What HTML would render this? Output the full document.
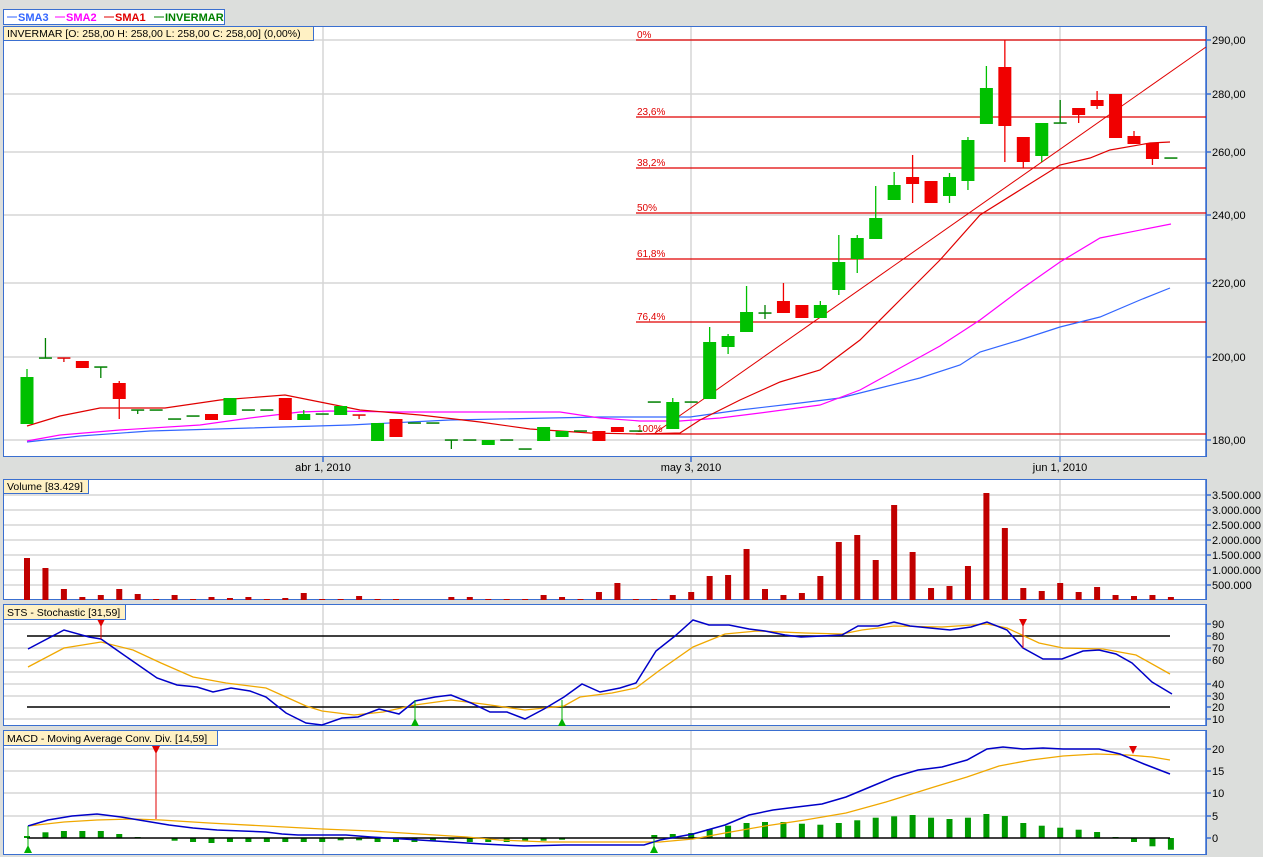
<!DOCTYPE html>
<html><head><meta charset="utf-8">
<style>
html,body{margin:0;padding:0;background:#dcdedc;width:1263px;height:857px;overflow:hidden;font-family:"Liberation Sans",sans-serif}
svg{position:absolute;left:0;top:0}
.ax{font-size:11px;fill:#000}
.fib{font-size:10px;fill:#e00000}
.lab{font-size:10.5px;fill:#000}
</style></head><body>
<svg id="s" width="1263" height="857" xmlns="http://www.w3.org/2000/svg">
<rect x="3.5" y="26.5" width="1203" height="430" fill="#fff" stroke="#3a6fd0"/>
<rect x="3.5" y="479.5" width="1203" height="120" fill="#fff" stroke="#3a6fd0"/>
<rect x="3.5" y="604.5" width="1203" height="121" fill="#fff" stroke="#3a6fd0"/>
<rect x="3.5" y="730.5" width="1203" height="124" fill="#fff" stroke="#3a6fd0"/>
<g stroke="#d6d6d6" stroke-width="1.5">
<line x1="4" y1="40" x2="1206" y2="40"/><line x1="4" y1="94" x2="1206" y2="94"/><line x1="4" y1="152" x2="1206" y2="152"/><line x1="4" y1="215" x2="1206" y2="215"/><line x1="4" y1="283" x2="1206" y2="283"/><line x1="4" y1="357" x2="1206" y2="357"/><line x1="4" y1="440" x2="1206" y2="440"/>
<line x1="323" y1="27" x2="323" y2="456"/><line x1="691" y1="27" x2="691" y2="456"/><line x1="1060" y1="27" x2="1060" y2="456"/>
<line x1="4" y1="495" x2="1206" y2="495"/><line x1="4" y1="510" x2="1206" y2="510"/><line x1="4" y1="525" x2="1206" y2="525"/><line x1="4" y1="540" x2="1206" y2="540"/><line x1="4" y1="555" x2="1206" y2="555"/><line x1="4" y1="570" x2="1206" y2="570"/><line x1="4" y1="585" x2="1206" y2="585"/>
<line x1="323" y1="480" x2="323" y2="599"/><line x1="691" y1="480" x2="691" y2="599"/><line x1="1060" y1="480" x2="1060" y2="599"/>
<line x1="4" y1="624" x2="1206" y2="624"/><line x1="4" y1="648" x2="1206" y2="648"/><line x1="4" y1="660" x2="1206" y2="660"/><line x1="4" y1="672" x2="1206" y2="672"/><line x1="4" y1="684" x2="1206" y2="684"/><line x1="4" y1="696" x2="1206" y2="696"/><line x1="4" y1="719" x2="1206" y2="719"/>
<line x1="323" y1="605" x2="323" y2="725"/><line x1="691" y1="605" x2="691" y2="725"/><line x1="1060" y1="605" x2="1060" y2="725"/>
<line x1="4" y1="749" x2="1206" y2="749"/><line x1="4" y1="771" x2="1206" y2="771"/><line x1="4" y1="793" x2="1206" y2="793"/><line x1="4" y1="816" x2="1206" y2="816"/>
<line x1="323" y1="731" x2="323" y2="854"/><line x1="691" y1="731" x2="691" y2="854"/><line x1="1060" y1="731" x2="1060" y2="854"/>
</g>
<g stroke="#3a6fd0" stroke-width="1.5">
<line x1="1206" y1="26" x2="1206" y2="457"/><line x1="1206" y1="479" x2="1206" y2="600"/><line x1="1206" y1="604" x2="1206" y2="726"/><line x1="1206" y1="730" x2="1206" y2="855"/>
<line x1="1206" y1="40" x2="1211" y2="40"/><line x1="1206" y1="94" x2="1211" y2="94"/><line x1="1206" y1="152" x2="1211" y2="152"/><line x1="1206" y1="215" x2="1211" y2="215"/><line x1="1206" y1="283" x2="1211" y2="283"/><line x1="1206" y1="357" x2="1211" y2="357"/><line x1="1206" y1="440" x2="1211" y2="440"/>
<line x1="1206" y1="495" x2="1211" y2="495"/><line x1="1206" y1="510" x2="1211" y2="510"/><line x1="1206" y1="525" x2="1211" y2="525"/><line x1="1206" y1="540" x2="1211" y2="540"/><line x1="1206" y1="555" x2="1211" y2="555"/><line x1="1206" y1="570" x2="1211" y2="570"/><line x1="1206" y1="585" x2="1211" y2="585"/>
<line x1="1206" y1="624" x2="1211" y2="624"/><line x1="1206" y1="636" x2="1211" y2="636"/><line x1="1206" y1="648" x2="1211" y2="648"/><line x1="1206" y1="660" x2="1211" y2="660"/><line x1="1206" y1="684" x2="1211" y2="684"/><line x1="1206" y1="696" x2="1211" y2="696"/><line x1="1206" y1="707" x2="1211" y2="707"/><line x1="1206" y1="719" x2="1211" y2="719"/>
<line x1="1206" y1="749" x2="1211" y2="749"/><line x1="1206" y1="771" x2="1211" y2="771"/><line x1="1206" y1="793" x2="1211" y2="793"/><line x1="1206" y1="816" x2="1211" y2="816"/><line x1="1206" y1="838" x2="1211" y2="838"/>
<line x1="323" y1="457" x2="323" y2="462"/><line x1="691" y1="457" x2="691" y2="462"/><line x1="1060" y1="457" x2="1060" y2="462"/>
</g>
<g class="ax">
<text x="1212" y="44">290,00</text><text x="1212" y="98">280,00</text><text x="1212" y="156">260,00</text><text x="1212" y="219">240,00</text><text x="1212" y="287">220,00</text><text x="1212" y="361">200,00</text><text x="1212" y="444">180,00</text>
<text x="1212" y="499">3.500.000</text><text x="1212" y="514">3.000.000</text><text x="1212" y="529">2.500.000</text><text x="1212" y="544">2.000.000</text><text x="1212" y="559">1.500.000</text><text x="1212" y="574">1.000.000</text><text x="1212" y="589">500.000</text>
<text x="1212" y="628">90</text><text x="1212" y="640">80</text><text x="1212" y="652">70</text><text x="1212" y="664">60</text><text x="1212" y="688">40</text><text x="1212" y="700">30</text><text x="1212" y="711">20</text><text x="1212" y="723">10</text>
<text x="1212" y="753">20</text><text x="1212" y="775">15</text><text x="1212" y="797">10</text><text x="1212" y="820">5</text><text x="1212" y="842">0</text>
<text x="323" y="471" text-anchor="middle">abr 1, 2010</text><text x="691" y="471" text-anchor="middle">may 3, 2010</text><text x="1060" y="471" text-anchor="middle">jun 1, 2010</text>
</g>
<g stroke="#e00000" stroke-width="1.2">
<line x1="636" y1="40" x2="1206" y2="40"/><line x1="636" y1="117" x2="1206" y2="117"/><line x1="636" y1="168" x2="1206" y2="168"/><line x1="636" y1="213" x2="1206" y2="213"/><line x1="636" y1="259" x2="1206" y2="259"/><line x1="636" y1="322" x2="1206" y2="322"/><line x1="636" y1="434" x2="1206" y2="434"/>
</g>
<g class="fib">
<text x="637" y="38">0%</text><text x="637" y="115">23,6%</text><text x="637" y="166">38,2%</text><text x="637" y="211">50%</text><text x="637" y="257">61,8%</text><text x="637" y="320">76,4%</text><text x="637" y="432">100%</text>
</g>
<polyline fill="none" stroke="#3366ff" stroke-width="1.2" points="27,442 80,436 150,431 250,428 350,425 450,420 550,418 600,417 650,417 690,417 740,410 800,403 840,398 880,388 920,378 960,365 980,352 1020,340 1060,327 1100,317 1140,300 1170,288"/>
<polyline fill="none" stroke="#ff00ff" stroke-width="1.2" points="27,441 60,435 120,430 200,425 250,418 300,412 330,411 400,412 500,412 560,412 600,418 640,421 680,421 720,418 760,413 820,405 860,390 900,368 940,346 980,320 1020,290 1060,262 1100,238 1171,224"/>
<polyline fill="none" stroke="#e00000" stroke-width="1.2" points="27,426 60,416 100,408 165,408 220,400 285,395 320,402 360,410 420,415 480,422 530,429 590,433 640,434 680,433 700,420 740,400 780,382 820,370 860,340 900,300 940,260 980,215 1020,190 1060,165 1090,158 1110,150 1150,143 1170,142"/>
<line x1="655" y1="433" x2="1206" y2="47" stroke="#e00000" stroke-width="1"/>
<g id="candles"></g>
<g id="vol" fill="#c00000"></g>
<line x1="27" y1="636" x2="1170" y2="636" stroke="#000" stroke-width="1.5"/>
<line x1="27" y1="707" x2="1170" y2="707" stroke="#000" stroke-width="1.5"/>
<polyline fill="none" stroke="#f0a800" stroke-width="1.3" points="28,667 64,648 101,642 133,650 161,663 193,677 226,683 266,688 286,697 306,706 322,711 354,715 383,712 415,705 451,700 483,704 525,710 564,706 580,697 612,693 636,688 660,670 693,647 725,634 757,631 805,633 842,634 862,630 894,626 942,627 987,624 1007,628 1039,643 1063,648 1103,649 1136,655 1170,674"/>
<polyline fill="none" stroke="#0000c8" stroke-width="1.5" points="28,649 64,630 89,637 101,639 121,653 157,678 177,685 197,687 213,692 231,688 250,691 266,697 286,713 306,723 322,725 342,718 358,717 379,709 399,714 415,701 435,697 451,695 471,703 490,712 507,712 525,719 544,709 564,697 582,684 600,692 620,688 636,683 656,651 675,636 693,620 709,625 729,625 749,629 765,631 785,635 801,637 822,636 842,635 858,626 878,626 894,622 910,626 930,628 950,630 971,627 987,622 1007,630 1023,648 1043,659 1062,659 1083,651 1099,650 1116,654 1132,663 1152,682 1172,694"/>
<line x1="101" y1="620" x2="101" y2="639" stroke="#e00000"/><polygon points="97,619 105,619 101,627" fill="#e00000"/>
<line x1="1023" y1="620" x2="1023" y2="648" stroke="#e00000"/><polygon points="1019,619 1027,619 1023,627" fill="#e00000"/>
<line x1="415" y1="700" x2="415" y2="726" stroke="#00b000"/><polygon points="411,726 419,726 415,718" fill="#00b000"/>
<line x1="562" y1="700" x2="562" y2="726" stroke="#00b000"/><polygon points="558,726 566,726 562,718" fill="#00b000"/>
<g id="hist" fill="#009a00"></g>
<line x1="27" y1="838" x2="1170" y2="838" stroke="#000" stroke-width="1.5"/>
<polyline fill="none" stroke="#f0a800" stroke-width="1.3" points="28,826 64,822 97,820 133,819 161,820 209,823 266,826 322,829 371,831 419,834 467,837 499,840 548,842 612,842 660,842 693,839 725,833 765,826 805,820 846,813 886,802 934,787 967,777 999,766 1031,760 1063,756 1096,754 1128,755 1152,757 1170,760"/>
<polyline fill="none" stroke="#0000c8" stroke-width="1.5" points="28,826 48,820 72,816 97,814 121,817 145,821 169,825 193,828 217,830 242,831 266,832 282,834 298,835 322,835 346,835 371,837 403,839 451,842 483,844 524,846 564,845 612,845 644,845 660,840 693,834 725,825 749,815 773,810 797,807 822,804 846,797 870,787 894,777 918,770 942,767 967,760 987,749 1003,747 1023,749 1043,748 1063,749 1099,749 1120,754 1144,764 1170,774"/>
<line x1="156" y1="748" x2="156" y2="819" stroke="#e00000"/><polygon points="152,746 160,746 156,754" fill="#e00000"/>
<polygon points="1129,746 1137,746 1133,754" fill="#e00000"/>
<line x1="28" y1="826" x2="28" y2="853" stroke="#00b000"/><polygon points="24,853 32,853 28,845" fill="#00b000"/>
<line x1="654" y1="838" x2="654" y2="853" stroke="#00b000"/><polygon points="650,853 658,853 654,845" fill="#00b000"/>
<rect x="3.5" y="9.5" width="221" height="15" fill="#fff" stroke="#3a6fd0"/>
<g font-size="11" font-weight="bold">
<line x1="7" y1="17" x2="17" y2="17" stroke="#3366ff"/><text x="18" y="21" fill="#3366ff">SMA3</text>
<line x1="55" y1="17" x2="65" y2="17" stroke="#ff00ff"/><text x="66" y="21" fill="#ff00ff">SMA2</text>
<line x1="104" y1="17" x2="114" y2="17" stroke="#e00000"/><text x="115" y="21" fill="#e00000">SMA1</text>
<line x1="154" y1="17" x2="164" y2="17" stroke="#008000"/><text x="165" y="21" fill="#008000">INVERMAR</text>
</g>
<rect x="3.5" y="26.5" width="310" height="14" fill="#fff1c4" stroke="#3a6fd0"/>
<text class="lab" x="7" y="37">INVERMAR [O: 258,00  H: 258,00  L: 258,00  C: 258,00] (0,00%)</text>
<rect x="3.5" y="479.5" width="85" height="14" fill="#fff1c4" stroke="#3a6fd0"/>
<text class="lab" x="7" y="490">Volume [83.429]</text>
<rect x="3.5" y="604.5" width="122" height="15" fill="#fff1c4" stroke="#3a6fd0"/>
<text class="lab" x="7" y="616">STS - Stochastic [31,59]</text>
<rect x="3.5" y="730.5" width="214" height="15" fill="#fff1c4" stroke="#3a6fd0"/>
<text class="lab" x="7" y="742">MACD - Moving Average Conv. Div. [14,59]</text>
</svg>
<script>
var NS="http://www.w3.org/2000/svg";
function el(p,t,a){var e=document.createElementNS(NS,t);for(var k in a)e.setAttribute(k,a[k]);p.appendChild(e);return e;}
function X(i){return 27+18.45*i;}
var C=[["g",377,424,369,424],["d",358,358,338,358],["q",358,358,358,362],["r",361,368,361,368],["d",367,367,367,378],["r",383,399,381,419],["d",410,410,410,414],["d",410,410,410,410],["d",419,419,419,419],["d",416,416,416,416],["r",414,420,414,420],["g",398,415,398,415],["d",410,410,410,410],["d",410,410,410,410],["r",398,420,398,420],["g",414,420,410,420],["d",414,414,414,414],["g",406,415,406,415],["q",415,415,415,419],["g",423,441,423,441],["r",419,437,419,437],["d",423,423,423,423],["d",423,423,423,423],["d",440,440,440,449],["d",440,440,440,440],["g",440,445,440,445],["d",440,440,440,440],["d",449,449,449,449],["g",427,441,427,441],["g",431,437,431,437],["d",431,431,431,431],["r",431,441,431,441],["r",427,432,427,432],["d",431,431,431,431],["d",402,402,402,402],["g",402,429,398,429],["d",402,402,402,402],["g",342,399,327,399],["g",336,347,334,354],["g",312,332,286,332],["d",313,313,305,319],["r",301,313,283,313],["r",305,318,305,318],["g",305,318,301,318],["g",262,290,235,295],["g",238,259,235,273],["g",218,239,186,239],["g",185,200,172,200],["r",177,184,155,203],["r",181,203,181,203],["g",177,196,173,203],["g",140,181,137,190],["g",88,124,66,124],["r",67,126,40,162],["r",137,162,137,168],["g",123,156,123,162],["d",123,123,100,123],["r",108,115,108,123],["r",100,106,91,109],["r",94,138,94,138],["r",136,144,131,144],["r",143,159,143,165],["d",158,158,158,158]];
var cg=document.getElementById("candles");
C.forEach(function(c,i){var x=X(i);var col=c[0]=="g"?"#00c000":c[0]=="r"?"#f00000":c[0]=="q"?"#e00000":"#008000";
if(c[3]<c[1]||c[4]>c[2])el(cg,"line",{x1:x,x2:x,y1:c[3],y2:c[4],stroke:col,"stroke-width":1.3});
if(c[0]=="d"||c[0]=="q")el(cg,"rect",{x:x-6.5,y:c[1]-0.7,width:13,height:1.5,fill:col});
else el(cg,"rect",{x:x-6.5,y:c[1],width:13,height:Math.max(2,c[2]-c[1]),fill:col});});
var V=[42,32,11,3,5,11,6,1,5,1,3,2,3,1,2,7,1,1,4,1,1,0,0,3,3,1,1,1,5,3,1,8,17,1,1,5,8,24,25,51,11,5,7,24,58,65,40,95,48,12,14,34,107,72,12,9,17,8,13,5,4,5,3];
var vg=document.getElementById("vol");
V.forEach(function(h,i){if(h>0)el(vg,"rect",{x:X(i)-3,y:600-h,width:6,height:h});});
var H=[-2,-5.7,-7,-7,-7,-4,-1,0,2.7,4,5,4,4,4,4,4,4,2.3,2.3,4,4,4,3,1.7,4,4,4,2.7,2.7,1.7,0,0,0,0,-3,-4,-5,-9,-12.3,-15,-16,-16,-14.3,-13.3,-15,-17.7,-20.3,-21.7,-23,-20.3,-19,-20.3,-24,-22,-15,-12.3,-10.3,-8.3,-6,-1,4,8.3,11.7];
var hg=document.getElementById("hist");
H.forEach(function(d,i){if(d!=0){var y=d<0?838+d:838;el(hg,"rect",{x:X(i)-3,y:y,width:6,height:Math.abs(d)});}});
</script>
</body></html>
